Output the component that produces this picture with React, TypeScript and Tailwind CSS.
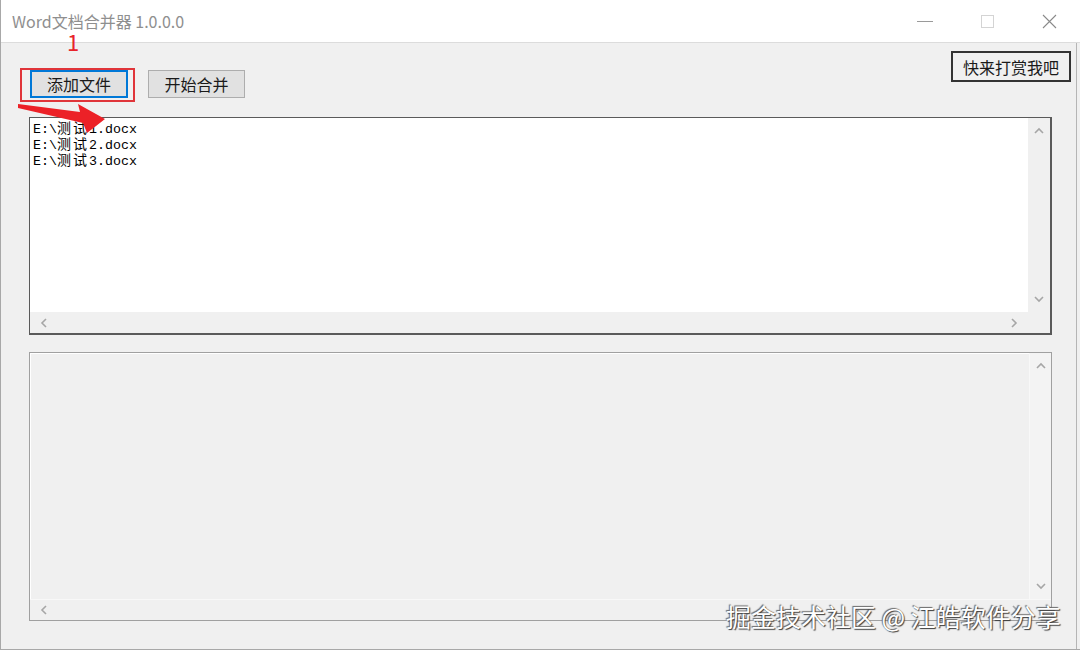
import React from 'react'

const ui = { fontFamily: '"Noto Sans CJK SC", "Microsoft YaHei", sans-serif' }
const mono = { fontFamily: '"Liberation Mono", "Noto Sans CJK SC", monospace' }

function Chevron({ dir }: { dir: "up" | "down" | "left" | "right" }) {
	const d = {
		up: "M1 6 L5 2 L9 6",
		down: "M1 2 L5 6 L9 2",
		left: "M6 1 L2 5 L6 9",
		right: "M2 1 L6 5 L2 9",
	}[dir]
	const vertical = dir === "up" || dir === "down"
	return (
		<svg width={vertical ? 10 : 8} height={vertical ? 8 : 10} viewBox={vertical ? "0 0 10 8" : "0 0 8 10"}>
			<path d={d} fill="none" stroke="#a6a6a6" strokeWidth="1.6" />
		</svg>
	)
}

// ascii in 8px cells, cjk in 16px cells, like the old SimSun listbox
function FileLine({ text }: { text: string }) {
	const parts = text.split(/([\u4e00-\u9fff]+)/).filter(Boolean)
	return (
		<div className="whitespace-pre h-[16px] leading-[16px] text-black">
			{parts.map((p, i) =>
				/[\u4e00-\u9fff]/.test(p)
					? <span key={i} className="text-[14px] leading-[16px] tracking-[2px]">{p}</span>
					: <span key={i} className="text-[13.33px] leading-[16px]">{p}</span>
			)}
		</div>
	)
}

function ScrollBox({ lines, readOnly }: { lines: string[]; readOnly?: boolean }) {
	return (
		<div
			className={`flex-1 min-h-0 flex flex-col ${readOnly
				? "border border-[#a0a0a0] bg-[#f0f0f0]"
				: "border border-[#5a5a5a] border-r-2 border-b-2 bg-white"}`}
		>
			<div className="flex flex-1 min-h-0">
				<div className={`flex-1 pl-[3px] pt-[3px] text-black ${readOnly ? "border-l border-t border-white" : ""}`} style={mono}>
					{lines.map(l => <FileLine key={l} text={l} />)}
				</div>
				<div className={`w-[22px] flex flex-col items-center justify-between pt-[9px] pb-[9px] ${readOnly ? "bg-[#f3f3f3] border-l border-[#f8f8f8]" : "bg-[#f0f0f0]"}`}>
					<Chevron dir="up" />
					<Chevron dir="down" />
				</div>
			</div>
			<div className={`h-[21px] flex shrink-0 ${readOnly ? "border-t border-[#f8f8f8]" : ""}`}>
				<div className="flex-1 bg-[#f0f0f0] flex items-center justify-between pl-[10px] pr-[10px]">
					<Chevron dir="left" />
					<Chevron dir="right" />
				</div>
				<div className="w-[22px] bg-[#f0f0f0]" />
			</div>
		</div>
	)
}

export default function App() {
	return (
		<div className="relative w-[1080px] h-[650px] overflow-hidden bg-[#f0f0f0] border-l border-b border-[#a8a8a8] flex flex-col" style={ui}>
			{/* title bar */}
			<div className="h-[43px] shrink-0 bg-white border-b border-[#dcdcdc] flex items-center justify-between pl-[11px]">
				<span className="text-[16px] text-[#8f8f8f]">Word文档合并器 1.0.0.0</span>
				<div className="flex items-center h-full">
					<div className="w-[62px] h-full flex items-center justify-center">
						<div className="w-[16px] h-px bg-[#9a9a9a]" />
					</div>
					<div className="w-[62px] h-full flex items-center justify-center">
						<div className="w-[13px] h-[13px] border border-[#d4d4d4]" />
					</div>
					<div className="w-[62px] h-full flex items-center justify-center">
						<svg width="15" height="15" viewBox="0 0 15 15">
							<path d="M1 1 L14 14 M14 1 L1 14" stroke="#8a8a8a" strokeWidth="1.1" />
						</svg>
					</div>
				</div>
			</div>

			{/* body */}
			<div className="flex-1 flex flex-col border-r border-[#b5b5b5] mr-[3px]">
				<div className="h-[74px] shrink-0 flex items-start justify-between pl-[29px] pr-[5px]">
					<div className="flex gap-[20px] mt-[27px]">
						<button className="w-[98px] h-[28px] border-2 border-[#0078d7] bg-[#e1e1e1] text-[16px] text-[#1a1a1a]">添加文件</button>
						<button className="w-[97px] h-[28px] border border-[#adadad] bg-[#e1e1e1] text-[16px] text-[#1a1a1a]">开始合并</button>
					</div>
					<button className="mt-[8px] w-[120px] h-[31px] border-2 border-[#333] bg-[#f0f0f0] text-[16px] text-[#1a1a1a]">快来打赏我吧</button>
				</div>

				<div className="ml-[28px] mr-[24px] h-[218px] flex flex-col">
					<ScrollBox lines={["E:\\测试1.docx", "E:\\测试2.docx", "E:\\测试3.docx"]} />
				</div>
				<div className="ml-[28px] mr-[24px] mt-[17px] h-[269px] flex flex-col">
					<ScrollBox lines={[]} readOnly />
				</div>
			</div>

			{/* annotations */}
			<span className="absolute left-[66px] top-[26px] text-[22px] leading-[30px] text-[#e8242a]">1</span>
			<div className="absolute left-[19px] top-[68px] w-[115px] h-[34px] border-2 border-[#e0353a]" />
			<svg className="absolute left-0 top-0" width="120" height="140" viewBox="0 0 120 140">
				<polygon points="17,104 79,112 77,104 104,119 86,133 82,123 17,108" fill="#ec2127" />
			</svg>

			{/* watermark */}
			<span
				className="absolute left-[725px] top-[599px] text-[25px] leading-[34px] text-white [text-shadow:1px_1px_1px_#3a3a3a,-1px_-1px_1px_#6a6a6a]"
			>
				掘金技术社区 @ 江皓软件分享
			</span>
		</div>
	)
}
